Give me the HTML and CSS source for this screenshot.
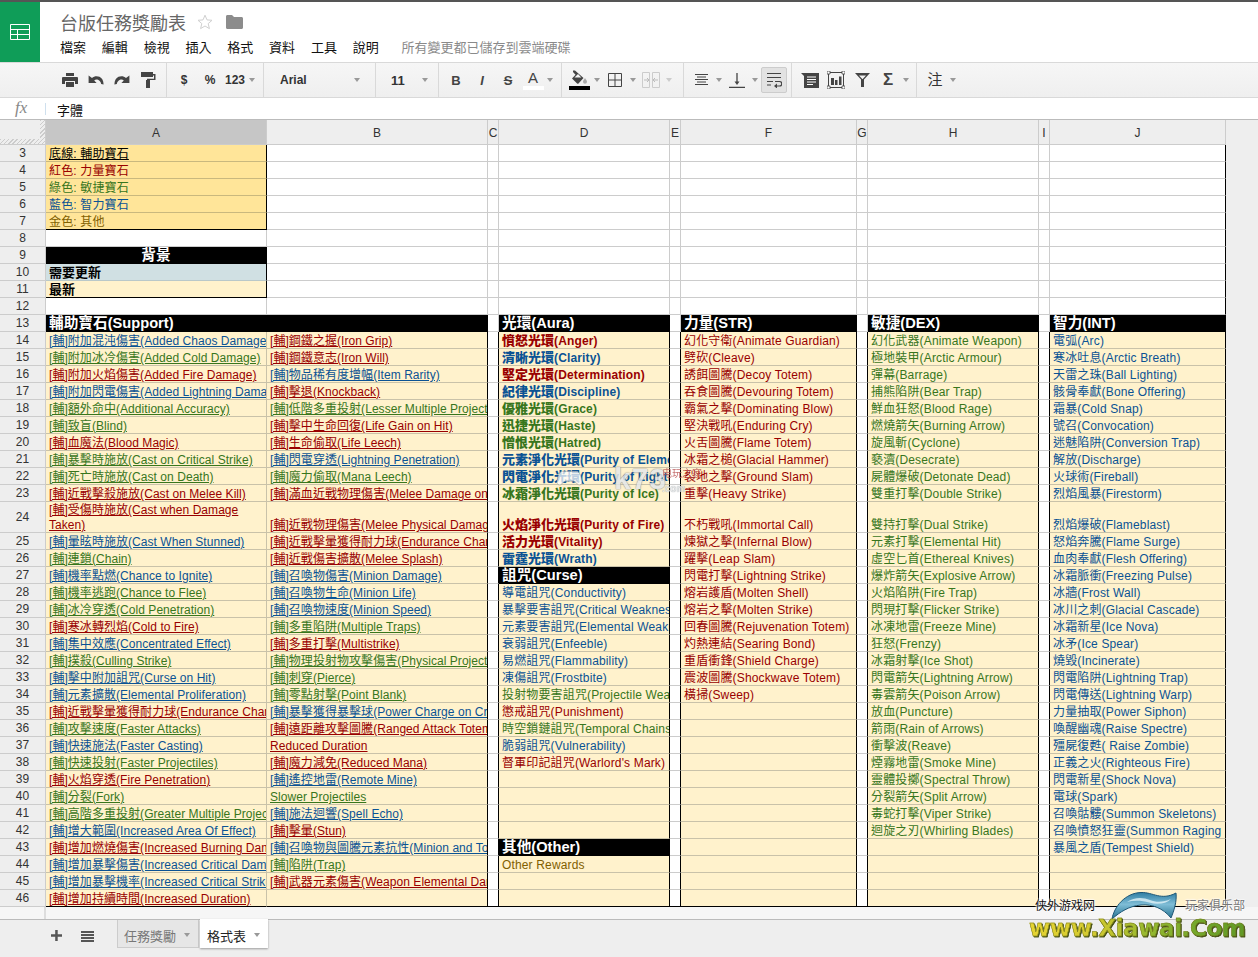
FILE: index.html
```html
<!DOCTYPE html>
<html lang="zh-Hant">
<head>
<meta charset="utf-8">
<title>台版任務獎勵表</title>
<link rel="stylesheet" href="styles.css">
</head>
<body>
<div class="app">
<header class="top">
  <div class="logo">
    <svg width="20" height="16" viewBox="0 0 20 16"><path d="M.5.5h19v15H.5zM.5 5.5h19M.5 10.5h19M7.5 5v11" fill="none" stroke="#fff"/></svg>
  </div>
  <div class="doc">
    <div class="title">
      <span class="name">台版任務獎勵表</span>
      <svg class="star" width="16" height="16" viewBox="0 0 16 16"><path d="M8 1.2l2 4.7 5 .4-3.8 3.3 1.2 5L8 12l-4.4 2.600 1.2-5L1 6.300l5-.4z" fill="#fff" stroke="#d0d0d0"/></svg>
      <svg class="folder" width="17" height="14" viewBox="0 0 17 14"><path d="M0 1.500C0 .7.600 0 1.500 0h4.500l2 2h7.500c.9 0 1.500.7 1.500 1.500v9c0 .8-.6 1.500-1.500 1.500h-14C.6 14 0 13.300 0 12.500z" fill="#8c8c8c"/></svg>
    </div>
    <nav class="menu">
      <span>檔案</span><span>編輯</span><span>檢視</span><span>插入</span><span>格式</span><span>資料</span><span>工具</span><span>說明</span>
      <span class="status">所有變更都已儲存到雲端硬碟</span>
    </nav>
  </div>
</header>

<div class="toolbar">
  <div class="grp g1">
    <svg width="16" height="14" viewBox="0 0 16 14"><path d="M4 0h8v3H4zM1 4h14a1 1 0 0 1 1 1v6h-3V8H3v3H0V5a1 1 0 0 1 1-1zM4 9h8v5H4z" fill="#444"/></svg>
    <svg width="16" height="10" viewBox="0 0 16 10"><path d="M4 3C6 1 9 .6 11.500 1.800 14 3 15.500 5.500 15.600 9.500L13.200 9C12.800 7 11.800 5.600 10 4.800 8.500 4.300 7.200 4.600 6.200 5.400L8.600 8H.6V.4z" fill="#444"/></svg>
    <svg class="flip" width="16" height="10" viewBox="0 0 16 10"><path d="M4 3C6 1 9 .6 11.500 1.800 14 3 15.500 5.500 15.600 9.500L13.200 9C12.800 7 11.800 5.600 10 4.800 8.500 4.300 7.200 4.600 6.200 5.400L8.600 8H.6V.4z" fill="#444"/></svg>
    <svg width="16" height="16" viewBox="0 0 16 16"><path d="M1 0h12v5H1zM13 2h2.500v6H8.500v1.500H7V6.800h7V3.500h-1zM6 8h4v8H6z" fill="#444"/></svg>
  </div>
  <div class="grp g2">
    <span class="t w26 bd">$</span><span class="t w26 bd">%</span><span class="t w24 bd">123</span><span class="cb"><i class="caret"></i></span>
  </div>
  <div class="grp g3"><span class="bd">Arial</span><span class="cb"><i class="caret"></i></span></div>
  <div class="grp g4"><span class="bd size">11</span><span class="cb"><i class="caret"></i></span></div>
  <div class="grp g5">
    <span class="t w26 fb">B</span><span class="t w26 fi">I</span><span class="t w26 fs">S</span>
    <span class="t w24 color"><span class="fa">A</span><i class="bar barw"></i></span><span class="cb"><i class="caret"></i></span>
  </div>
  <div class="grp g6">
    <span class="t w26 color">
      <svg class="bucket" width="17" height="15" viewBox="0 0 17 15"><path d="M2 0.500l2 0 8.500 7.500-5 5.500a1 1 0 0 1-1.400 0L1 8.500l3.500-3.800L2 2z" fill="#444"/><path d="M3.500 7.500L7 4l3.300 3.500z" fill="#f2f2f2"/><path d="M14 8c1.100 1.700 2 2.600 2 3.800a2 2 0 0 1-4 0c0-1.200.9-2.100 2-3.800z" fill="#aaa"/></svg>
      <i class="bar bark"></i>
    </span><span class="cb"><i class="caret"></i></span>
    <span class="t w26"><svg width="14" height="14" viewBox="0 0 14 14"><path d="M.5.500h13v13H.5zM7 0v14M0 7h14" fill="none" stroke="#444"/></svg></span><span class="cb"><i class="caret"></i></span>
    <span class="t w26"><svg width="18" height="16" viewBox="0 0 18 16"><path d="M.5.500h7v15h-7zM10.500.500h7v15h-7z" fill="none" stroke="#ccc"/><path d="M2 8h5M5 6l2 2-2 2M16 8h-5M13 6l-2 2 2 2" fill="none" stroke="#bbb"/></svg></span><span class="cb"><i class="caret faint"></i></span>
  </div>
  <div class="grp g7">
    <span class="t w26"><svg width="13" height="12" viewBox="0 0 13 12"><path d="M0 .500h13M2 3h9M0 5.500h13M2 8h9M0 10.500h13" stroke="#444" fill="none"/></svg></span><span class="cb"><i class="caret"></i></span>
    <span class="t w26"><svg width="16" height="15" viewBox="0 0 16 15"><path d="M0 14.500h16M8 0v10" stroke="#444" stroke-width="1.300" fill="none"/><path d="M5.500 8.500h5L8 12z" fill="#444"/></svg></span><span class="cb"><i class="caret"></i></span>
    <span class="t w26 wrap"><svg width="15" height="16" viewBox="0 0 15 16"><path d="M0 1.500h14M0 5.500h14M0 9.500h6M8 9.500h4.500a2 2 0 0 1 0 4.500H9" stroke="#444" stroke-width="1.200" fill="none"/><path d="M0 13h4" stroke="#444"/><path d="M10 11.500v5L7 14z" fill="#444"/></svg></span>
  </div>
  <div class="grp g8">
    <span class="t w26"><svg width="18" height="15" viewBox="0 0 18 15"><path d="M0 0h18v15H3V3z" fill="#444"/><path d="M6 4h9M6 6.500h9M6 9h9M6 11.500h6" stroke="#fff" fill="none"/></svg></span>
    <span class="t w26"><svg width="18" height="18" viewBox="0 0 18 18"><path d="M1.500 1.500h15v15h-15z" fill="none" stroke="#444"/><path d="M4 7h3v7H4zM8 9h2.500v5H8zM12 5.500h2.500V14H12z" fill="#444"/><path d="M0 0h3v3H0zM15 0h3v3h-3zM0 15h3v3H0zM15 15h3v3h-3z" fill="#fff" stroke="#444" stroke-width=".8"/></svg></span>
    <span class="t w26"><svg width="15" height="14" viewBox="0 0 15 14"><path d="M0 0h15L9 6.500V14H6V6.500z M4 2.500l3.500 3.800 3.500-3.800z" fill="#444" fill-rule="evenodd"/></svg></span>
    <span class="t w26 sigma">Σ</span><span class="cb"><i class="caret"></i></span>
  </div>
  <div class="grp g9"><span class="t w26 note">注</span><span class="cb"><i class="caret"></i></span></div>
</div>

<div class="formula"><span class="fx">fx</span><span class="fsep"></span><span class="fval">字體</span></div>

<div class="sheet-wrap">
<table class="sheet">
<colgroup><col class="c-rh"><col class="c-wide"><col class="c-wide"><col class="c-gap"><col class="c-m"><col class="c-gap"><col class="c-l"><col class="c-gap"><col class="c-m"><col class="c-gap"><col class="c-l"></colgroup>
<thead><tr><th class="corner"></th><th class="sel">A</th><th>B</th><th>C</th><th>D</th><th>E</th><th>F</th><th>G</th><th>H</th><th>I</th><th>J</th></tr></thead>
<tbody class="head-rows">
<tr><th>3</th><td class="leg und">底線: 輔助寶石</td><td></td><td></td><td></td><td></td><td></td><td></td><td></td><td></td><td></td></tr>
<tr><th>4</th><td class="leg r">紅色: 力量寶石</td><td></td><td></td><td></td><td></td><td></td><td></td><td></td><td></td><td></td></tr>
<tr><th>5</th><td class="leg g">綠色: 敏捷寶石</td><td></td><td></td><td></td><td></td><td></td><td></td><td></td><td></td><td></td></tr>
<tr><th>6</th><td class="leg b">藍色: 智力寶石</td><td></td><td></td><td></td><td></td><td></td><td></td><td></td><td></td><td></td></tr>
<tr><th>7</th><td class="leg o lastleg">金色: 其他</td><td></td><td></td><td></td><td></td><td></td><td></td><td></td><td></td><td></td></tr>
<tr><th>8</th><td></td><td></td><td></td><td></td><td></td><td></td><td></td><td></td><td></td><td></td></tr>
<tr><th>9</th><td class="h mid">背景</td><td></td><td></td><td></td><td></td><td></td><td></td><td></td><td></td><td></td></tr>
<tr><th>10</th><td class="stale"><b>需要更新</b></td><td></td><td></td><td></td><td></td><td></td><td></td><td></td><td></td><td></td></tr>
<tr><th>11</th><td class="fresh"><b>最新</b></td><td></td><td></td><td></td><td></td><td></td><td></td><td></td><td></td><td></td></tr>
<tr><th>12</th><td></td><td></td><td></td><td></td><td></td><td></td><td></td><td></td><td></td><td></td></tr>
<tr><th>13</th><td class="h" colspan="2">輔助寶石(Support)</td><td></td><td class="h">光環(Aura)</td><td></td><td class="h">力量(STR)</td><td></td><td class="h">敏捷(DEX)</td><td></td><td class="h">智力(INT)</td></tr>
</tbody>
<tbody class="data">
<tr><th>14</th><td class="b">[輔]附加混沌傷害(Added Chaos Damage)</td><td class="r">[輔]鋼鐵之握(Iron Grip)</td><td></td><td class="r a"><b>憤怒光環</b>(Anger)</td><td></td><td class="r">幻化守衛(Animate Guardian)</td><td></td><td class="g">幻化武器(Animate Weapon)</td><td></td><td class="b">電弧(Arc)</td></tr>
<tr><th>15</th><td class="g">[輔]附加冰冷傷害(Added Cold Damage)</td><td class="r">[輔]鋼鐵意志(Iron Will)</td><td></td><td class="b a"><b>清晰光環</b>(Clarity)</td><td></td><td class="r">劈砍(Cleave)</td><td></td><td class="g">極地裝甲(Arctic Armour)</td><td></td><td class="b">寒冰吐息(Arctic Breath)</td></tr>
<tr><th>16</th><td class="r">[輔]附加火焰傷害(Added Fire Damage)</td><td class="b">[輔]物品稀有度增幅(Item Rarity)</td><td></td><td class="r a"><b>堅定光環</b>(Determination)</td><td></td><td class="r">誘餌圖騰(Decoy Totem)</td><td></td><td class="g">彈幕(Barrage)</td><td></td><td class="b">天雷之珠(Ball Lighting)</td></tr>
<tr><th>17</th><td class="b">[輔]附加閃電傷害(Added Lightning Damage)</td><td class="r">[輔]擊退(Knockback)</td><td></td><td class="b a"><b>紀律光環</b>(Discipline)</td><td></td><td class="r">吞食圖騰(Devouring Totem)</td><td></td><td class="g">捕熊陷阱(Bear Trap)</td><td></td><td class="b">骸骨奉獻(Bone Offering)</td></tr>
<tr><th>18</th><td class="g">[輔]額外命中(Additional Accuracy)</td><td class="g">[輔]低階多重投射(Lesser Multiple Projectiles)</td><td></td><td class="g a"><b>優雅光環</b>(Grace)</td><td></td><td class="r">霸氣之擊(Dominating Blow)</td><td></td><td class="g">鮮血狂怒(Blood Rage)</td><td></td><td class="b">霜暴(Cold Snap)</td></tr>
<tr><th>19</th><td class="g">[輔]致盲(Blind)</td><td class="r">[輔]擊中生命回復(Life Gain on Hit)</td><td></td><td class="g a"><b>迅捷光環</b>(Haste)</td><td></td><td class="r">堅決戰吼(Enduring Cry)</td><td></td><td class="g">燃燒箭矢(Burning Arrow)</td><td></td><td class="b">號召(Convocation)</td></tr>
<tr><th>20</th><td class="r">[輔]血魔法(Blood Magic)</td><td class="r">[輔]生命偷取(Life Leech)</td><td></td><td class="g a"><b>憎恨光環</b>(Hatred)</td><td></td><td class="r">火舌圖騰(Flame Totem)</td><td></td><td class="g">旋風斬(Cyclone)</td><td></td><td class="b">迷魅陷阱(Conversion Trap)</td></tr>
<tr><th>21</th><td class="g">[輔]暴擊時施放(Cast on Critical Strike)</td><td class="b">[輔]閃電穿透(Lightning Penetration)</td><td></td><td class="b a"><b>元素淨化光環</b>(Purity of Elements)</td><td></td><td class="r">冰霜之槌(Glacial Hammer)</td><td></td><td class="g">褻瀆(Desecrate)</td><td></td><td class="b">解放(Discharge)</td></tr>
<tr><th>22</th><td class="g">[輔]死亡時施放(Cast on Death)</td><td class="g">[輔]魔力偷取(Mana Leech)</td><td></td><td class="b a"><b>閃電淨化光環</b>(Purity of Lightning)</td><td></td><td class="r">裂地之擊(Ground Slam)</td><td></td><td class="g">屍體爆破(Detonate Dead)</td><td></td><td class="b">火球術(Fireball)</td></tr>
<tr><th>23</th><td class="r">[輔]近戰擊殺施放(Cast on Melee Kill)</td><td class="r">[輔]滿血近戰物理傷害(Melee Damage on Full Life)</td><td></td><td class="g a"><b>冰霜淨化光環</b>(Purity of Ice)</td><td></td><td class="r">重擊(Heavy Strike)</td><td></td><td class="g">雙重打擊(Double Strike)</td><td></td><td class="b">烈焰風暴(Firestorm)</td></tr>
<tr class="tall"><th>24</th><td class="r wr"><span class="wrl">[輔]受傷時施放(Cast when Damage Taken)</span></td><td class="r">[輔]近戰物理傷害(Melee Physical Damage)</td><td></td><td class="r a"><b>火焰淨化光環</b>(Purity of Fire)</td><td></td><td class="r">不朽戰吼(Immortal Call)</td><td></td><td class="g">雙持打擊(Dual Strike)</td><td></td><td class="b">烈焰爆破(Flameblast)</td></tr>
<tr><th>25</th><td class="b">[輔]暈眩時施放(Cast When Stunned)</td><td class="r">[輔]近戰擊暈獲得耐力球(Endurance Charge on Melee Stun)</td><td></td><td class="r a"><b>活力光環</b>(Vitality)</td><td></td><td class="r">煉獄之擊(Infernal Blow)</td><td></td><td class="g">元素打擊(Elemental Hit)</td><td></td><td class="b">怒焰奔騰(Flame Surge)</td></tr>
<tr><th>26</th><td class="g">[輔]連鎖(Chain)</td><td class="r">[輔]近戰傷害擴散(Melee Splash)</td><td></td><td class="b a"><b>雷霆光環</b>(Wrath)</td><td></td><td class="r">躍擊(Leap Slam)</td><td></td><td class="g">虛空匕首(Ethereal Knives)</td><td></td><td class="b">血肉奉獻(Flesh Offering)</td></tr>
<tr><th>27</th><td class="b">[輔]機率點燃(Chance to Ignite)</td><td class="b">[輔]召喚物傷害(Minion Damage)</td><td></td><td class="h">詛咒(Curse)</td><td></td><td class="r">閃電打擊(Lightning Strike)</td><td></td><td class="g">爆炸箭矢(Explosive Arrow)</td><td></td><td class="b">冰霜脈衝(Freezing Pulse)</td></tr>
<tr><th>28</th><td class="g">[輔]機率逃跑(Chance to Flee)</td><td class="b">[輔]召喚物生命(Minion Life)</td><td></td><td class="b">導電詛咒(Conductivity)</td><td></td><td class="r">熔岩護盾(Molten Shell)</td><td></td><td class="g">火焰陷阱(Fire Trap)</td><td></td><td class="b">冰牆(Frost Wall)</td></tr>
<tr><th>29</th><td class="g">[輔]冰冷穿透(Cold Penetration)</td><td class="b">[輔]召喚物速度(Minion Speed)</td><td></td><td class="b">暴擊要害詛咒(Critical Weakness)</td><td></td><td class="r">熔岩之擊(Molten Strike)</td><td></td><td class="g">閃現打擊(Flicker Strike)</td><td></td><td class="b">冰川之刺(Glacial Cascade)</td></tr>
<tr><th>30</th><td class="r">[輔]寒冰轉烈焰(Cold to Fire)</td><td class="g">[輔]多重陷阱(Multiple Traps)</td><td></td><td class="b">元素要害詛咒(Elemental Weakness)</td><td></td><td class="r">回春圖騰(Rejuvenation Totem)</td><td></td><td class="g">冰凍地雷(Freeze Mine)</td><td></td><td class="b">冰霜新星(Ice Nova)</td></tr>
<tr><th>31</th><td class="b">[輔]集中效應(Concentrated Effect)</td><td class="r">[輔]多重打擊(Multistrike)</td><td></td><td class="b">衰弱詛咒(Enfeeble)</td><td></td><td class="r">灼熱連結(Searing Bond)</td><td></td><td class="g">狂怒(Frenzy)</td><td></td><td class="b">冰矛(Ice Spear)</td></tr>
<tr><th>32</th><td class="g">[輔]撲殺(Culling Strike)</td><td class="g">[輔]物理投射物攻擊傷害(Physical Projectile Attack Damage)</td><td></td><td class="b">易燃詛咒(Flammability)</td><td></td><td class="r">重盾衝鋒(Shield Charge)</td><td></td><td class="g">冰霜射擊(Ice Shot)</td><td></td><td class="b">燒毀(Incinerate)</td></tr>
<tr><th>33</th><td class="b">[輔]擊中附加詛咒(Curse on Hit)</td><td class="g">[輔]刺穿(Pierce)</td><td></td><td class="b">凍傷詛咒(Frostbite)</td><td></td><td class="r">震波圖騰(Shockwave Totem)</td><td></td><td class="g">閃電箭矢(Lightning Arrow)</td><td></td><td class="b">閃電陷阱(Lightning Trap)</td></tr>
<tr><th>34</th><td class="b">[輔]元素擴散(Elemental Proliferation)</td><td class="g">[輔]零點射擊(Point Blank)</td><td></td><td class="g">投射物要害詛咒(Projectile Weakness)</td><td></td><td class="r">橫掃(Sweep)</td><td></td><td class="g">毒雲箭矢(Poison Arrow)</td><td></td><td class="b">閃電傳送(Lightning Warp)</td></tr>
<tr><th>35</th><td class="r">[輔]近戰擊暈獲得耐力球(Endurance Charge on Melee Stun)</td><td class="b">[輔]暴擊獲得暴擊球(Power Charge on Critical)</td><td></td><td class="r">懲戒詛咒(Punishment)</td><td></td><td></td><td></td><td class="g">放血(Puncture)</td><td></td><td class="b">力量抽取(Power Siphon)</td></tr>
<tr><th>36</th><td class="g">[輔]攻擊速度(Faster Attacks)</td><td class="r">[輔]遠距離攻擊圖騰(Ranged Attack Totem)</td><td></td><td class="g">時空鎖鏈詛咒(Temporal Chains)</td><td></td><td></td><td></td><td class="g">箭雨(Rain of Arrows)</td><td></td><td class="b">喚醒幽魂(Raise Spectre)</td></tr>
<tr><th>37</th><td class="b">[輔]快速施法(Faster Casting)</td><td class="r">Reduced Duration</td><td></td><td class="b">脆弱詛咒(Vulnerability)</td><td></td><td></td><td></td><td class="g">衝擊波(Reave)</td><td></td><td class="b">殭屍復甦( Raise Zombie)</td></tr>
<tr><th>38</th><td class="g">[輔]快速投射(Faster Projectiles)</td><td class="r">[輔]魔力減免(Reduced Mana)</td><td></td><td class="r">督軍印記詛咒(Warlord's Mark)</td><td></td><td></td><td></td><td class="g">煙霧地雷(Smoke Mine)</td><td></td><td class="b">正義之火(Righteous Fire)</td></tr>
<tr><th>39</th><td class="r">[輔]火焰穿透(Fire Penetration)</td><td class="b">[輔]遙控地雷(Remote Mine)</td><td></td><td></td><td></td><td></td><td></td><td class="g">靈體投擲(Spectral Throw)</td><td></td><td class="b">閃電新星(Shock Nova)</td></tr>
<tr><th>40</th><td class="g">[輔]分裂(Fork)</td><td class="g">Slower Projectiles</td><td></td><td></td><td></td><td></td><td></td><td class="g">分裂箭矢(Split Arrow)</td><td></td><td class="b">電球(Spark)</td></tr>
<tr><th>41</th><td class="g">[輔]高階多重投射(Greater Multiple Projectiles)</td><td class="b">[輔]施法迴響(Spell Echo)</td><td></td><td></td><td></td><td></td><td></td><td class="g">毒蛇打擊(Viper Strike)</td><td></td><td class="b">召喚骷髏(Summon Skeletons)</td></tr>
<tr><th>42</th><td class="b">[輔]增大範圍(Increased Area Of Effect)</td><td class="r">[輔]擊暈(Stun)</td><td></td><td></td><td></td><td></td><td></td><td class="g">迴旋之刃(Whirling Blades)</td><td></td><td class="b">召喚憤怒狂靈(Summon Raging Spirit)</td></tr>
<tr><th>43</th><td class="r">[輔]增加燃燒傷害(Increased Burning Damage)</td><td class="b">[輔]召喚物與圖騰元素抗性(Minion and Totem Elemental Resistance)</td><td></td><td class="h">其他(Other)</td><td></td><td></td><td></td><td></td><td></td><td class="b">暴風之盾(Tempest Shield)</td></tr>
<tr><th>44</th><td class="b">[輔]增加暴擊傷害(Increased Critical Damage)</td><td class="g">[輔]陷阱(Trap)</td><td></td><td class="o">Other Rewards</td><td></td><td></td><td></td><td></td><td></td><td></td></tr>
<tr><th>45</th><td class="b">[輔]增加暴擊機率(Increased Critical Strikes)</td><td class="r">[輔]武器元素傷害(Weapon Elemental Damage)</td><td></td><td></td><td></td><td></td><td></td><td></td><td></td><td></td></tr>
<tr class="last"><th>46</th><td class="r">[輔]增加持續時間(Increased Duration)</td><td></td><td></td><td></td><td></td><td></td><td></td><td></td><td></td><td></td></tr>
</tbody>
</table>
</div>

<div class="hscroll"><span class="hs-corner"></span></div>

<footer class="tabs">
  <svg class="plus" width="11" height="11" viewBox="0 0 11 11"><path d="M0 4.200h11v2.500H0zM4.200 0h2.500v11H4.200z" fill="#555"/></svg>
  <svg class="list" width="13" height="11" viewBox="0 0 13 11"><path d="M0 0h13v2H0zM0 3h13v2H0zM0 6h13v2H0zM0 9h13v2H0z" fill="#555"/></svg>
  <div class="tab">任務獎勵<i class="caret"></i></div>
  <div class="tab on">格式表<i class="caret"></i></div>
</footer>

<aside class="wm-k73">
  <svg width="25" height="17" viewBox="0 0 28 18"><path d="M6 1h16c3 0 5 5 6 11 .4 3-2 5-4 4l-5-4H9l-5 4c-2 1-4.400-1-4-4C1 6 3 1 6 1z" fill="#fff" fill-opacity=".85" stroke="#888" stroke-opacity=".6"/></svg>
  <span class="k73">k73</span><span class="k73s">电玩之家</span><span class="k73c">.com</span>
</aside>
<aside class="wm-xia">
  <span class="xia-a">侠外游戏网</span>
  <span class="xia-b">玩家俱乐部</span>
  <svg class="wave" width="68" height="30" viewBox="0 0 68 30">
    <defs><linearGradient id="wv" x1="0" y1="0" x2="0" y2="1"><stop offset="0" stop-color="#2f7ea3"/><stop offset=".45" stop-color="#7fbdd6"/><stop offset="1" stop-color="#22708f"/></linearGradient></defs>
    <path d="M1 28C3 16 14 2 30 1.500 42 1 50 10 65 2 66 10 63 20 60 27 52 17 41 13 30 14 18 15 9 21 1 28Z" fill="url(#wv)" stroke="#1d5675"/>
    <path d="M16 11C23 6 32 6 39 9 46 12 53 11 60 8 55 13 46 14 38 11.500 31 9.500 23 9 16 11Z" fill="#e2f2f8" fill-opacity=".8"/>
  </svg>
  <span class="xia-url">www.Xiawai.Com</span>
</aside>
</div>
</body>
</html>
```

FILE: styles.css
```css
* { box-sizing: border-box; }
html, body { margin: 0; padding: 0; }
body {
  font-family: "Liberation Sans", "Noto Sans CJK TC", sans-serif;
  color: #222;
  background: #fff;
}
.app { position: relative; width: 1258px; height: 957px; overflow: hidden; display: flex; flex-direction: column; }

/* top */
.top { display: flex; height: 62px; border-top: 2px solid #555; background: #fff; flex: none; }
.logo { width: 40px; background: #0f9d58; display: flex; align-items: center; justify-content: center; }
.doc { padding-left: 20px; }
.title { display: flex; align-items: center; height: 24px; margin-top: 8px; }
.name { font-size: 18px; color: #666; width: 126px; white-space: nowrap; }
.star { margin-left: 11px; }
.folder { margin-left: 13px; }
.menu { display: flex; gap: 15.8px; margin-top: 4px; font-size: 13px; line-height: 20px; color: #111; }
.status { color: #8a8a8a; margin-left: 7px; }

/* toolbar */
.toolbar {
  display: flex; height: 36px; flex: none;
  border-top: 1px solid #d9d9d9; border-bottom: 1px solid #d9d9d9;
  background: linear-gradient(#f6f6f6, #efefef);
  color: #444; font-size: 12px;
}
.grp { display: flex; align-items: center; border-right: 1px solid #d9d9d9; flex: none; }
.g1 { width: 167px; padding-left: 62px; gap: 10px; }
.g2 { width: 97px; padding-left: 4px; }
.g3 { width: 112px; padding: 0 13px 0 16px; justify-content: space-between; }
.g4 { width: 63px; padding: 0 8px 0 15px; justify-content: space-between; }
.g5 { width: 123px; padding-left: 4px; }
.g6 { width: 122px; padding-left: 4px; }
.g7 { width: 108px; padding-left: 4px; }
.g8 { width: 125px; padding-left: 5px; }
.g9 { border-right: 0; padding-left: 5px; }
.flip { transform: scaleX(-1); }
.t { display: flex; align-items: center; justify-content: center; flex-direction: column; flex: none; height: 26px; }
.w26 { width: 26px; }
.w24 { width: 24px; }
.bd { font-weight: 700; color: #333; }
.size { font-size: 13px; }
.cb { width: 10px; flex: none; display: flex; justify-content: center; }
.caret { display: block; width: 0; height: 0; border-left: 3.5px solid transparent; border-right: 3.5px solid transparent; border-top: 4px solid #999; }
.caret.faint { border-top-color: #ccc; }
.fb { font-weight: 700; font-size: 13px; }
.fi { font-weight: 700; font-style: italic; font-size: 13px; }
.fs { font-weight: 700; font-size: 13px; text-decoration: line-through; }
.fa { font-size: 15px; line-height: 15px; }
.color { gap: 1px; }
.bar { display: block; width: 21px; height: 4px; }
.barw { background: #fff; }
.bark { background: #000; }
.wrap { margin-left: 1px; background: #e2e2e2; border: 1px solid #ccc; border-radius: 2px; }
.sigma { font-size: 17px; font-weight: 700; }
.note { font-size: 15px; padding-bottom: 4px; color: #333; }

/* formula */
.formula { display: flex; align-items: center; height: 22px; flex: none; background: #fff; border-bottom: 1px solid #bbb; }
.fx { font-family: "Liberation Serif", serif; font-style: italic; font-size: 17px; color: #888; width: 45px; padding-left: 15px; padding-bottom: 2px; }
.fsep { width: 1px; height: 12px; background: #cfe0ee; }
.fval { font-size: 13px; color: #111; margin-left: 11px; padding-top: 2px; }

/* sheet */
.sheet-wrap { background: #eee; flex: none; height: 787px; overflow: hidden; }
.sheet { table-layout: fixed; border-collapse: separate; border-spacing: 0; width: 1226px; font-size: 12px; letter-spacing: .15px; }
.c-rh { width: 46px; }
.c-wide { width: 221px; }
.c-gap { width: 11px; }
.c-m { width: 171px; }
.c-l { width: 176px; }
.sheet tr { height: 17px; }
.sheet tr.tall { height: 31px; }
.sheet thead tr { height: 25px; }
.sheet th {
  background: #eee; font-weight: 400; color: #333; letter-spacing: 0;
  border-right: 1px solid #ccc; border-bottom: 1px solid #ccc;
  padding: 1px 0 0; line-height: 15px; text-align: center; overflow: hidden;
}
.sheet thead th { padding-top: 2px; }
.sheet thead th.sel { background: #c6c6c6; }
.sheet th.corner {
  background:
    repeating-linear-gradient(135deg, #ccc 0 1px, #eee 1px 3px) right top / 5px 100% no-repeat,
    repeating-linear-gradient(135deg, #ccc 0 1px, #eee 1px 3px) left bottom / 100% 5px no-repeat,
    #eee;
}
.sheet td {
  background: #fff; padding: 2px 3px 0; line-height: 14px; vertical-align: bottom;
  white-space: nowrap; overflow: hidden;
  border-right: 1px solid #ccc; border-bottom: 1px solid #ccc;
}
.sheet b { font-size: 13px; letter-spacing: 0; line-height: 1; }

/* text colours */
.r { color: #990000; }
.g { color: #38761d; }
.b { color: #0b5394; }
.o { color: #7f6000; }
.a { font-weight: 700; }

/* header rows */
.head-rows td:last-child { border-right-color: #000; }
.sheet td.leg { background: #ffe599; border-bottom-color: #c9b87e; border-right-color: #000; }
.sheet td.lastleg { border-bottom-color: #000; }
.und { text-decoration: underline; color: #000; }
.sheet td.stale { background: #d0e0e3; border-bottom-color: #b9c8c9; border-right-color: #000; }
.sheet td.fresh { background: #fff2cc; border-bottom-color: #000; border-right-color: #000; }
.stale b, .fresh b { color: #000; }
.sheet td.h {
  background: #000; color: #fff; font-weight: 700; font-size: 14.67px; letter-spacing: 0;
  padding: 0 3px; line-height: 16px;
  border-right-color: #000; border-bottom-color: #000;
}
.sheet td.mid { text-align: center; }

/* data rows */
.data td { background: #fff2cc; border-bottom-color: #c9c2a9; border-right-color: #000; }
.data td:nth-child(2) { border-right-color: #c9c2a9; }
.data td:nth-child(2), .data td:nth-child(3) { text-decoration: underline; letter-spacing: .05px; }
.data td:nth-child(4), .data td:nth-child(6), .data td:nth-child(8), .data td:nth-child(10) { background: #fff; border-bottom-color: #ccc; }
.sheet td.wr { white-space: normal; line-height: 15px; padding-top: 0; }
.wrl { display: block; margin: 1px 0 -1px; }
.data .last td { border-bottom-color: #000; }
.data .last th { border-bottom-color: #ccc; }
.data td.h { background: #000; }

/* bottom */
.hscroll { height: 12px; background: #f6f6f6; flex: none; }
.hs-corner { display: block; width: 46px; height: 12px; border-right: 2px solid #ddd; }
.tabs { flex: 1; background: #eee; border-top: 1px solid #bbb; display: flex; align-items: flex-start; padding-left: 51px; }
.plus { margin-top: 10px; }
.list { margin: 11px 23px 0 19px; }
.tab {
  display: flex; align-items: center; justify-content: space-between;
  width: 82px; height: 28px; padding: 3px 8px 0 6px;
  font-size: 13px; color: #777; background: #e6e6e6; border: 1px solid #ccc; border-top: 0;
}
.tab.on { width: 68px; height: 29px; margin-top: -1px; margin-left: 1px; padding-left: 7px; background: #fff; color: #222; border: 0; box-shadow: 0 1px 2px rgba(0,0,0,.35); }

/* overlaid watermarks */
.wm-k73 { position: absolute; left: 556px; top: 462px; width: 150px; height: 34px; opacity: .85; }
.wm-k73 svg { position: absolute; left: 1px; top: 8px; }
.k73 { position: absolute; left: 58px; top: 2px; font: 700 30px/30px "Liberation Sans", sans-serif; color: #e4e8ea; text-shadow: 0 0 1px #777, 0 0 2px #999; letter-spacing: 1px; }
.k73s { position: absolute; left: 106px; top: 6px; font-size: 10px; line-height: 12px; color: #b55; }
.k73c { position: absolute; left: 106px; top: 21px; font: 700 10px/12px "Liberation Sans", sans-serif; color: #e4e8ea; text-shadow: 0 0 1px #777; }

.wm-xia { position: absolute; left: 1026px; top: 888px; width: 232px; height: 56px; }
.xia-a, .xia-b { position: absolute; top: 10px; font-size: 12px; line-height: 16px; text-shadow: 0 0 2px #fff, 0 0 2px #fff, 0 0 2px #fff; white-space: nowrap; }
.xia-a { left: 9px; color: #111; }
.xia-b { left: 159px; color: #777; }
.wave { position: absolute; left: 85px; top: 3px; }
.xia-url {
  position: absolute; left: 3px; top: 27px; width: 220px;
  font: 700 23px/26px "DejaVu Sans", sans-serif; letter-spacing: -.42px; white-space: nowrap;
  color: transparent;
  background: linear-gradient(90deg, #e6d431 0%, #d2c930 30%, #93b82f 55%, #6fa52a 80%, #5f9826 100%);
  -webkit-background-clip: text; background-clip: text;
  -webkit-text-stroke: .5px #76791c;
  filter: drop-shadow(1px 1px 0 #3f4a10);
}
```
